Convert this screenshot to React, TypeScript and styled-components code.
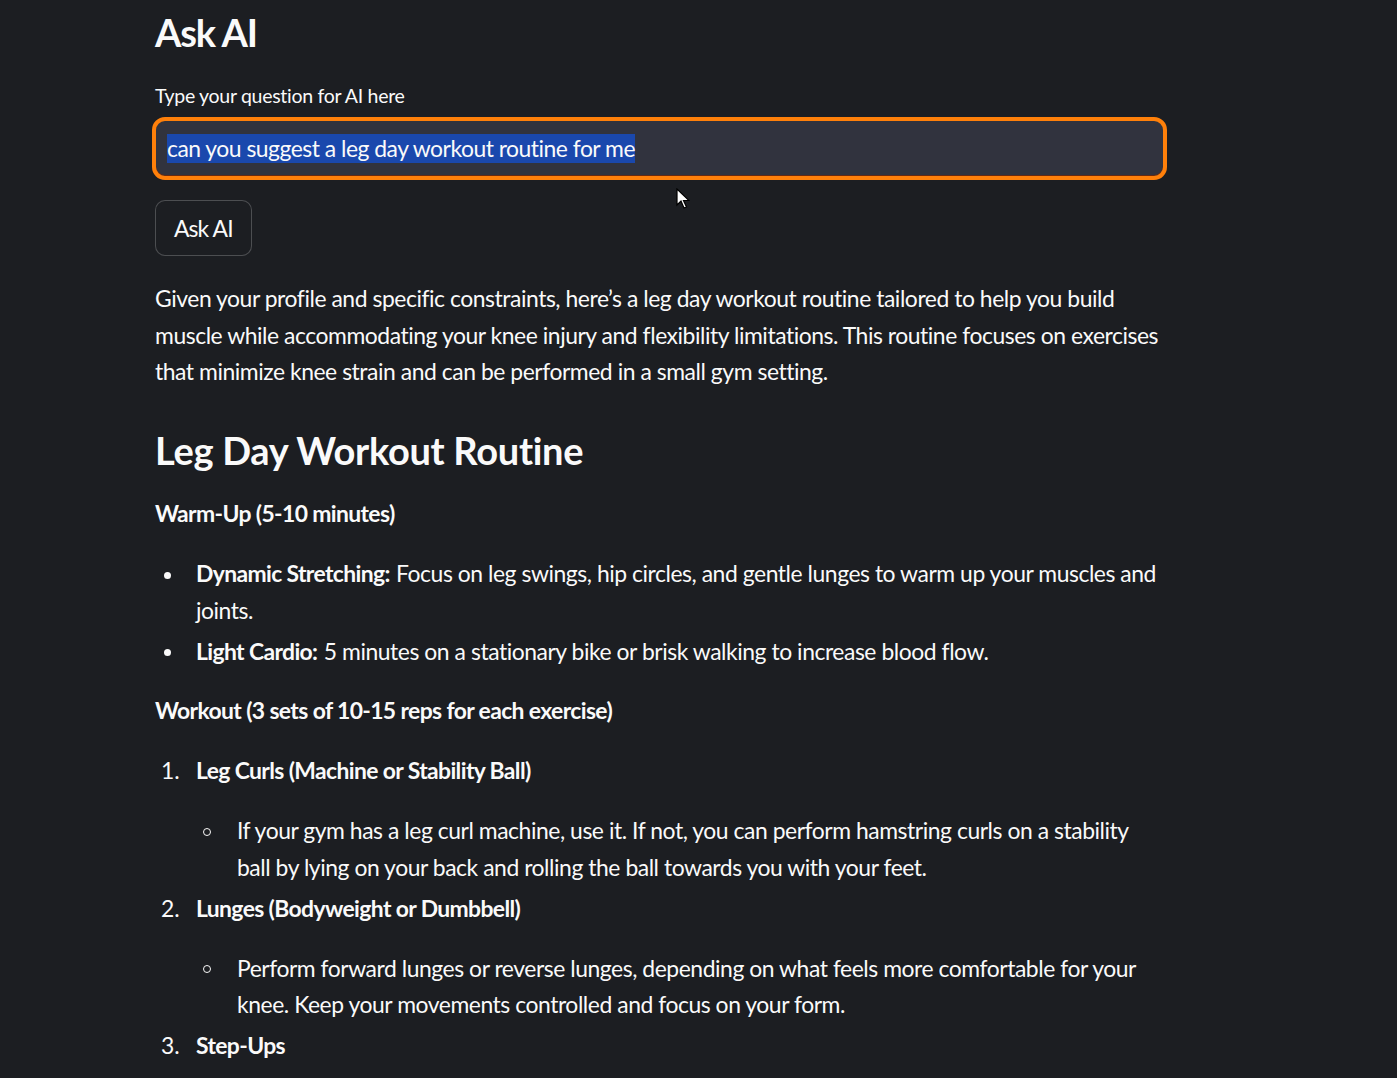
import React from "react";
import styled, { createGlobalStyle } from "styled-components";

const Global = createGlobalStyle`
  html, body { margin: 0; padding: 0; background: #1c1e22; }
  body { font-family: "Lato", "Open Sans", sans-serif; color: #fafafa; }
  * { box-sizing: border-box; }
  strong { letter-spacing: -0.62px; margin-right: 1px; }
`;

const Page = styled.div`
  position: relative;
  min-height: 1078px;
  background: #1c1e22;
  overflow: hidden;
`;

const Main = styled.main`
  width: 1009px;
  margin-left: 155px;
  padding-top: 5px;
  font-size: 22.9px;
  line-height: 36.6px;
  letter-spacing: -0.45px;
`;

const Title = styled.h1`
  margin: 0;
  font-size: 38px;
  line-height: 54px;
  font-weight: 700;
  letter-spacing: -1.2px;
`;

const Label = styled.label`
  display: block;
  margin-top: 21px;
  font-size: 19.5px;
  line-height: 32px;
  letter-spacing: -0.3px;
`;

const InputBox = styled.div`
  margin-top: 5px;
  margin-left: -3px;
  width: 1015px;
  height: 63px;
  border: 4px solid #ff800a;
  border-radius: 13px;
  background: #31333e;
  display: flex;
  align-items: center;
  padding-left: 11px;
  box-shadow: inset 0 -1px 0 #6a2a10;
`;

const Selected = styled.span`
  background: #1a48ad;
  line-height: 29px;
  font-size: 22.9px;
  letter-spacing: -0.5px;
`;

const Button = styled.button`
  margin-top: 20px;
  height: 56px;
  padding: 0 18px;
  border: 1.5px solid rgba(250, 250, 250, 0.22);
  border-radius: 10px;
  background: #1c1e22;
  color: #fafafa;
  font-family: inherit;
  font-size: 22.9px;
  letter-spacing: -0.9px;
`;

const Para = styled.p<{ $top?: number; $bottom?: number }>`
  margin: ${(p) => p.$top ?? 0}px 0 ${(p) => p.$bottom ?? 0}px 0;
`;

const Heading = styled.h2`
  margin: 33px 0 0 0;
  font-size: 38px;
  line-height: 54px;
  font-weight: 700;
  letter-spacing: -0.3px;
`;

const List = styled.ul<{ $top?: number }>`
  list-style: none;
  margin: ${(p) => p.$top ?? 0}px 0 0 0;
  padding: 0;
`;

const Item = styled.li`
  display: flex;
  margin-top: 4.4px;
  &:first-child { margin-top: 0; }
`;

const Marker = styled.span<{ $indent: number }>`
  flex: 0 0 41px;
  padding-left: ${(p) => p.$indent}px;
  letter-spacing: 0;
`;

const Disc = styled.span`
  display: inline-block;
  width: 7px;
  height: 7px;
  border-radius: 50%;
  background: #fafafa;
  vertical-align: middle;
  margin-bottom: 3px;
`;

const Circle = styled.span`
  display: inline-block;
  width: 8px;
  height: 8px;
  border-radius: 50%;
  border: 1.2px solid #fafafa;
  vertical-align: middle;
  margin-bottom: 3px;
`;

const Body = styled.div`
  flex: 1;
`;

const Cursor = styled.svg`
  position: absolute;
  left: 676px;
  top: 188px;
`;

const Bullet = ({ children }: { children: React.ReactNode }) => (
  <Item>
    <Marker $indent={9}>
      <Disc />
    </Marker>
    <Body>{children}</Body>
  </Item>
);

const Sub = ({ children }: { children: React.ReactNode }) => (
  <Item>
    <Marker $indent={7}>
      <Circle />
    </Marker>
    <Body>{children}</Body>
  </Item>
);

const Step = ({ n, title, children }: { n: number; title: string; children?: React.ReactNode }) => (
  <Item>
    <Marker $indent={6}>{n}.</Marker>
    <Body>
      <strong>{title}</strong>
      {children && <List $top={23.4}>{children}</List>}
    </Body>
  </Item>
);

export default function App() {
  return (
    <Page>
      <Global />
      <Main>
        <Title>Ask AI</Title>
        <Label>Type your question for AI here</Label>
        <InputBox>
          <Selected>can you suggest a leg day workout routine for me</Selected>
        </InputBox>
        <Button>Ask AI</Button>
        <Para $top={24}>
          Given your profile and specific constraints, here’s a leg day workout routine tailored to help you build
          muscle while accommodating your knee injury and flexibility limitations. This routine focuses on exercises
          that minimize knee strain and can be performed in a small gym setting.
        </Para>
        <Heading>Leg Day Workout Routine</Heading>
        <Para $top={18.7}>
          <strong>Warm-Up (5-10 minutes)</strong>
        </Para>
        <List $top={23.4}>
          <Bullet>
            <strong>Dynamic Stretching:</strong> Focus on leg swings, hip circles, and gentle lunges to warm up your
            muscles and joints.
          </Bullet>
          <Bullet>
            <strong>Light Cardio:</strong> 5 minutes on a stationary bike or brisk walking to increase blood flow.
          </Bullet>
        </List>
        <Para $top={22.4}>
          <strong>Workout (3 sets of 10-15 reps for each exercise)</strong>
        </Para>
        <List as="ol" $top={23.4}>
          <Step n={1} title="Leg Curls (Machine or Stability Ball)">
            <Sub>
              If your gym has a leg curl machine, use it. If not, you can perform hamstring curls on a stability ball
              by lying on your back and rolling the ball towards you with your feet.
            </Sub>
          </Step>
          <Step n={2} title="Lunges (Bodyweight or Dumbbell)">
            <Sub>
              Perform forward lunges or reverse lunges, depending on what feels more comfortable for your knee. Keep
              your movements controlled and focus on your form.
            </Sub>
          </Step>
          <Step n={3} title="Step-Ups" />
        </List>
      </Main>
      <Cursor width="14" height="22" viewBox="0 0 14 22">
        <path d="M1 1 L1 17 L5 13 L8 20 L10.5 19 L7.5 12.5 L13 12.5 Z" fill="#fff" stroke="#000" strokeWidth="1.2" />
      </Cursor>
    </Page>
  );
}
